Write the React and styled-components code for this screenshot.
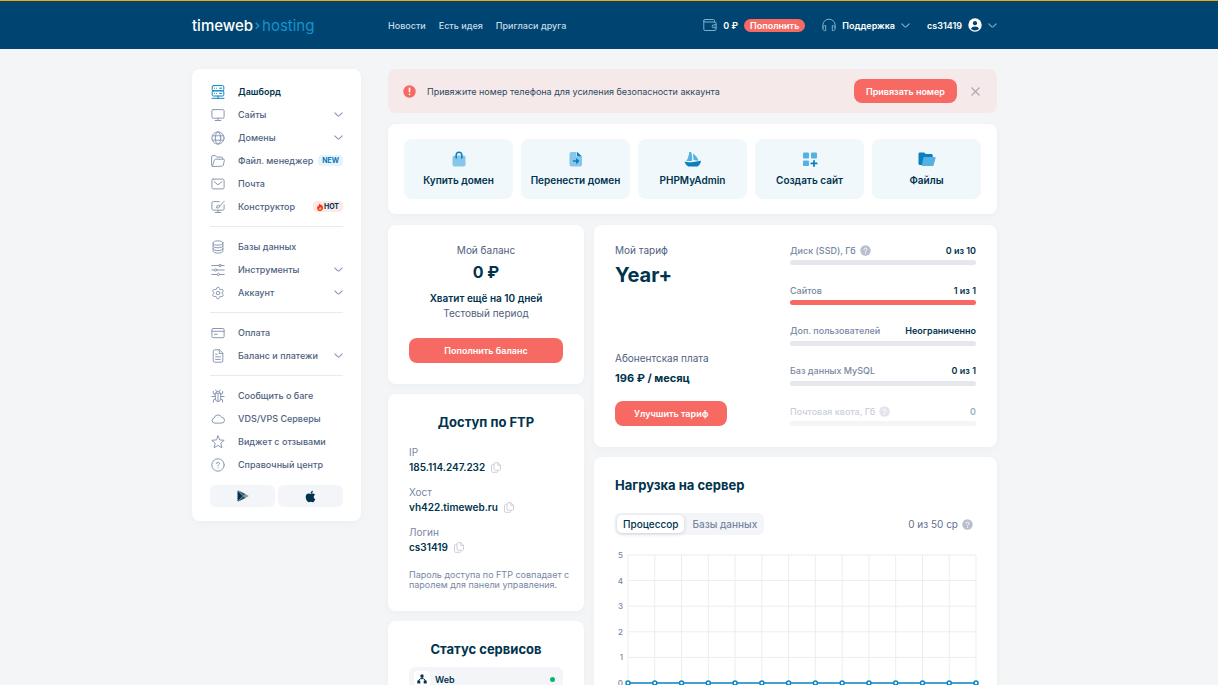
import React, { useState } from 'react'
import styled, { createGlobalStyle, css } from 'styled-components'
import { Settings } from 'lucide-react'
import { FaApple } from 'react-icons/fa'

const GlobalStyle = createGlobalStyle`
  * {
    box-sizing: border-box;
  }

  body {
    margin: 0;
    background: #f3f5f7;
    color: #00334d;
    font-family: 'Inter', 'Noto Sans', sans-serif;
    font-size: 9px;
    line-height: 15px;
    font-weight: 500;
  }

  a {
    color: inherit;
    text-decoration: none;
  }

  button {
    border: 0;
    padding: 0;
    background: none;
    color: inherit;
    font: inherit;
    cursor: pointer;
  }

  h2, p, dl, dd, ul {
    margin: 0;
    padding: 0;
  }

  svg {
    display: block;
    flex: none;
  }
`

/* layout */

const Shell = styled.div`
  padding: 0 29px 0 0;
`

const Container = styled.div`
  max-width: 805px;
  margin: 0 auto;
`

const TopBar = styled.header`
  background: #004571;
  border-top: 1px solid #f5a800;
  color: #fff;
`

const TopInner = styled(Container)`
  display: flex;
  align-items: center;
  height: 48px;
`

const Logo = styled.a`
  display: flex;
  align-items: center;
  gap: 2px;
  width: 196px;
  font-size: 15px;
  font-weight: 500;

  span {
    color: #1294cf;
    font-weight: 400;
  }

  svg {
    color: #1294cf;
  }
`

const TopNav = styled.nav`
  display: flex;
  gap: 13px;
  color: #c5dbe8;
`

const TopActions = styled.div`
  display: flex;
  align-items: center;
  margin-left: auto;
  font-weight: 600;
`

const TopGroup = styled.div`
  display: flex;
  align-items: center;
  gap: 6px;
  margin-left: 17px;

  svg {
    color: #7fb0c8;
  }
`

const Pill = styled.button`
  height: 13px;
  padding: 0 6px;
  border-radius: 7px;
  background: #f66a63;
  line-height: 13px;
`

const Columns = styled(Container)`
  display: grid;
  grid-template-columns: 169px minmax(0, 1fr);
  gap: 27px;
  align-items: start;
  padding: 20px 0;
`

const Card = styled.section`
  background: #fff;
  border-radius: 8px;
  box-shadow: 0 2px 8px rgba(0, 51, 77, 0.03);
  padding: ${(p) => p.$pad || '20px 21px 21px'};
`

const Content = styled.main`
  display: flex;
  flex-direction: column;
  gap: 11px;
`

const Panels = styled.div`
  display: grid;
  grid-template-columns: 196px minmax(0, 1fr);
  gap: 10px;
  align-items: start;
`

const Stack = styled.div`
  display: flex;
  flex-direction: column;
  gap: 10px;
`

/* side menu */

const SideCard = styled(Card).attrs({ as: 'nav', $pad: '11px 18px 14px' })``

const MenuGroup = styled.ul`
  list-style: none;

  & + & {
    margin-top: 8px;
    padding-top: 8px;
    border-top: 1px solid #e8eaef;
  }
`

const MenuLink = styled.a`
  display: flex;
  align-items: center;
  height: 23px;
  padding-left: 1px;
  color: ${(p) => (p.$active ? '#00334d' : '#4f6180')};
  font-weight: ${(p) => (p.$active ? 600 : 500)};

  svg {
    color: ${(p) => (p.$active ? '#0b84c6' : '#8b98b3')};
  }

  > svg:first-child {
    margin-right: 13px;
  }

  > :nth-child(n + 3) {
    margin-left: auto;
  }
`

const Badge = styled.span`
  display: flex;
  align-items: center;
  gap: 1px;
  height: 11px;
  padding: 0 4px;
  border-radius: 4px;
  font-size: 7px;
  line-height: 11px;
  font-weight: 700;
  color: ${(p) => (p.$hot ? '#00334d' : '#0077b8')};
  background: ${(p) => (p.$hot ? '#fde9e8' : '#e6f3fa')};
`

const Stores = styled.div`
  display: grid;
  grid-template-columns: 1fr 1fr;
  gap: 3px;
  margin-top: 9px;
`

const StoreLink = styled.a`
  display: flex;
  align-items: center;
  justify-content: center;
  height: 22px;
  border-radius: 6px;
  background: #f4f5f8;
  color: #00334d;
`

/* alert and shortcuts */

const Alert = styled.div`
  display: flex;
  align-items: center;
  height: 44px;
  padding: 0 16px 0 15px;
  border-radius: 8px;
  background: #f6e9e9;

  p {
    margin: 0 auto 0 11px;
    color: #2c4a62;
    font-weight: 400;
  }
`

const CloseButton = styled.button`
  display: flex;
  margin-left: 13px;
  color: #a9a9b3;
`

const Button = styled.button`
  display: block;
  height: ${(p) => (p.$compact ? '24px' : '25px')};
  width: ${(p) => (p.$wide ? '100%' : 'auto')};
  padding: 0 ${(p) => (p.$compact ? '12px' : '19px')};
  border-radius: 8px;
  background: #f66a63;
  color: #fff;
  font-weight: 600;
`

const Shortcuts = styled(Card).attrs({ $pad: '15px 16px' })`
  display: grid;
  grid-template-columns: repeat(5, 1fr);
  gap: 8px;
`

const Shortcut = styled.a`
  display: flex;
  flex-direction: column;
  align-items: center;
  justify-content: center;
  gap: 6px;
  height: 60px;
  border-radius: 8px;
  background: #f0f8fc;
  font-size: 10px;
  font-weight: 600;
`

/* balance, ftp and status */

const Title = styled.h2`
  font-size: 13px;
  line-height: 16px;
  font-weight: 700;
  text-align: ${(p) => (p.$center ? 'center' : 'left')};
`

const Caption = styled.p`
  font-size: 10px;
  font-weight: ${(p) => (p.$strong ? 600 : 400)};
  color: ${(p) => (p.$strong ? '#00334d' : '#4f6180')};
`

const BalanceCard = styled(Card)`
  text-align: center;
`

const Amount = styled.p`
  margin: 3px 0 8px;
  font-size: 16px;
  line-height: 22px;
  font-weight: 700;
`

const TopUp = styled(Button)`
  margin-top: 17px;
`

const Access = styled.dl`
  display: grid;
  gap: 10px;
  margin: 15px 0;
  font-size: 10px;

  dt {
    color: #7887a3;
    font-weight: 400;
  }

  dd {
    display: flex;
    align-items: center;
    gap: 6px;
    font-weight: 600;
  }

  button {
    color: #c8c9d8;
  }
`

const Note = styled.p`
  margin-right: -12px;
  color: #7887a3;
  line-height: 10px;
  font-weight: 400;
`

const Service = styled.a`
  display: flex;
  align-items: center;
  gap: 5px;
  height: 24px;
  margin-top: 10px;
  padding: 0 8px 0 5px;
  border-radius: 6px;
  background: #f4f5f8;
  font-weight: 600;
`

const ServiceIcon = styled.span`
  display: grid;
  place-items: center;
  width: 16px;
  height: 16px;
  border-radius: 4px;
  background: #fff;
`

const Dot = styled.i`
  width: 5px;
  height: 5px;
  margin-left: auto;
  border-radius: 50%;
  background: #09b66d;
`

/* tariff */

const TariffCard = styled(Card).attrs({ $pad: '18px 21px 21px' })`
  display: grid;
  grid-template-columns: 160px minmax(0, 1fr);
  gap: 15px;
`

const Plan = styled.div`
  display: flex;
  flex-direction: column;
  align-items: flex-start;
`

const PlanName = styled.h2`
  margin: 4px 0 auto;
  font-size: 20px;
  line-height: 26px;
  font-weight: 700;
`

const Price = styled.p`
  margin: 5px 0 15px;
  font-size: 11px;
  font-weight: 700;
`

const Limits = styled.div`
  display: grid;
  align-content: space-between;
  gap: 18px;
  min-height: 183px;
`

const Limit = styled.div`
  opacity: ${(p) => (p.$muted ? 0.4 : 1)};
`

const LimitHead = styled.div`
  display: flex;
  align-items: center;
  gap: 4px;
  height: 14px;
  margin-bottom: 3px;
  color: #7887a3;

  strong {
    margin-left: auto;
    color: #00334d;
    font-weight: 600;
  }
`

const Bar = styled.div`
  height: 5px;
  border-radius: 3px;
  overflow: hidden;
  background: #e6e7ec;

  div {
    height: 100%;
    background: #f66a63;
  }
`

/* server load */

const LoadHead = styled.div`
  display: flex;
  align-items: center;
  justify-content: space-between;
  margin: 20px 0 12px;
`

const Tabs = styled.div`
  display: flex;
  height: 22px;
  padding: 2px;
  border-radius: 6px;
  background: #f4f5f8;
`

const Tab = styled.button`
  padding: 0 6px;
  border-radius: 5px;
  font-size: 10px;
  color: #7887a3;

  & + & {
    padding: 0 5px 0 8px;
  }

  ${(p) =>
    p.$active &&
    css`
      background: #fff;
      color: #00334d;
      box-shadow: 0 1px 4px rgba(0, 40, 80, 0.16);
    `}
`

const Usage = styled.div`
  display: flex;
  align-items: center;
  gap: 4px;
  padding-right: 6px;
  font-size: 10px;
  font-weight: 400;
  color: #5f7090;
`

const ChartSvg = styled.svg`
  width: 100%;
  height: auto;

  text {
    fill: #7887a3;
    font-size: 8px;
    text-anchor: end;
  }
`

/* icons */

const Icon = ({ size = 14, children }) => (
  <svg
    width={size}
    height={size}
    viewBox="0 0 14 14"
    fill="none"
    stroke="currentColor"
    strokeLinecap="round"
    strokeLinejoin="round"
    aria-hidden="true"
  >
    {children}
  </svg>
)

const Chevron = () => (
  <svg
    width="9"
    height="5"
    viewBox="0 0 9 5"
    fill="none"
    stroke="currentColor"
    strokeWidth="1.1"
    strokeLinecap="round"
    strokeLinejoin="round"
    aria-hidden="true"
  >
    <path d="M.8 .8L3.9 3.8Q4.5 4.3 5.1 3.8L8.2 .8" />
  </svg>
)

const Hint = () => (
  <svg width="11" height="11" viewBox="0 0 11 11" aria-hidden="true">
    <circle cx="5.5" cy="5.5" r="5.2" fill="#b9bece" />
    <path d="M4 4.4a1.5 1.4 0 1 1 2.3 1.2c-.6.4-.8.5-.8 1.1" fill="none" stroke="#fff" strokeLinecap="round" />
    <circle cx="5.5" cy="8.2" r=".6" fill="#fff" />
  </svg>
)

const CopyIcon = () => (
  <svg width="10" height="11" viewBox="0 0 10 11" fill="none" stroke="currentColor" strokeWidth=".9" strokeLinejoin="round" aria-hidden="true">
    <path d="M3 1.7a1 1 0 0 1 1-1h3l2.5 2.5v4a1 1 0 0 1-1 1H4a1 1 0 0 1-1-1z" />
    <path d="M6.8.8v2.6h2.6M3 2.7H1.5a1 1 0 0 0-1 1v5.6a1 1 0 0 0 1 1h4.4a1 1 0 0 0 1-1V8.3" />
  </svg>
)

const icons = {
  server: (
    <Icon>
      <rect x="1.2" y=".6" width="11.6" height="5.2" rx="1.2" />
      <rect x="1.2" y="5.8" width="11.6" height="5.2" rx="1.2" />
      <path d="M3.5 3.2h.1M5.6 3.2h.1M8.6 3.2h2M3.5 8.4h.1M5.6 8.4h.1M8.6 8.4h2M7 11v2.2M1 13.3h12" />
    </Icon>
  ),
  monitor: (
    <Icon>
      <rect x=".9" y="1.6" width="12.2" height="8.6" rx="1.3" />
      <path d="M7 10.2v2.2M4.2 12.5h5.6" />
    </Icon>
  ),
  globe: (
    <Icon>
      <circle cx="7" cy="7" r="6.1" />
      <ellipse cx="7" cy="7" rx="2.7" ry="6.1" />
      <path d="M1.5 4.8h11M1.5 9.2h11" />
    </Icon>
  ),
  folder: (
    <Icon>
      <path d="M1.4 12.1C.8 12 .6 11.5.6 11V2.8c0-.7.5-1.2 1.2-1.2h2.6l1.4 1.5h4.7c.7 0 1.2.5 1.2 1.2v.9" />
      <path d="M1.4 12.2l2-6c.2-.6.6-1 1.2-1h7.9c.7 0 1 .5.9 1.1l-1.1 4.8c-.2.7-.6 1.1-1.3 1.1z" />
    </Icon>
  ),
  mail: (
    <Icon>
      <rect x=".9" y="2.1" width="12.2" height="9.8" rx="1.3" />
      <path d="M3 4.6l4 3.2 4-3.2" />
    </Icon>
  ),
  builder: (
    <Icon>
      <path d="M8.2 1.6h-6c-.7 0-1.3.6-1.3 1.3v6c0 .7.6 1.3 1.3 1.3h9.6c.7 0 1.3-.6 1.3-1.3V5M7 10.2v2.2M4.2 12.5h5.6" />
      <path d="M13.2 1.3L8.3 6.4M8.3 5.4a1.3 1.3 0 0 0-2.2.8c-.1.7-.5 1-1.1 1.3 1.4.8 3.5.6 3.9-1.1z" />
    </Icon>
  ),
  database: (
    <Icon>
      <ellipse cx="7" cy="3" rx="4.9" ry="2.1" />
      <path d="M2.1 3v8c0 1.2 2.2 2.1 4.9 2.1s4.9-.9 4.9-2.1V3M2.1 5.8c0 1.1 2.2 2 4.9 2s4.9-.9 4.9-2M2.1 8.6c0 1.1 2.2 2 4.9 2s4.9-.9 4.9-2" />
    </Icon>
  ),
  sliders: (
    <Icon>
      <path d="M.8 2.5h7M10.2 2.5h3M.8 7h2.6M5.8 7h7.4M.8 11.5h5.4M8.6 11.5h4.6" />
      <circle cx="9" cy="2.5" r="1.2" />
      <circle cx="4.6" cy="7" r="1.2" />
      <circle cx="7.4" cy="11.5" r="1.2" />
    </Icon>
  ),
  settings: <Settings size={14} strokeWidth={1.7} aria-hidden="true" />,
  card: (
    <Icon>
      <rect x=".9" y="2.5" width="12.2" height="9.2" rx="1.2" />
      <path d="M1 5.3h12M3.4 8.3h3" />
    </Icon>
  ),
  doc: (
    <Icon>
      <path d="M8.2.8H3.4c-.7 0-1.2.5-1.2 1.2v10c0 .7.5 1.2 1.2 1.2h7.2c.7 0 1.2-.5 1.2-1.2V4.4zM8.2.8v3.6h3.6M4.6 5.2h1.6M4.6 7.8h4.8M4.6 10.4h4.8" />
    </Icon>
  ),
  bug: (
    <Icon>
      <path d="M4.3 4.2h5.4v5.2a2.7 3.2 0 0 1-5.4 0zM4.9 4.2a2.1 2.1 0 0 1 4.2 0M7 4.5v8M5.5 2.2L4.6 1M8.5 2.2l.9-1.2M4.3 7.5H.9M9.7 7.5h3.4M4.3 5.4L2.3 4.6V2.4M9.7 5.4l2-.8V2.4M4.4 10l-2 .8v2.3M9.6 10l2 .8v2.3" />
    </Icon>
  ),
  cloud: (
    <Icon>
      <path d="M3.4 11.1a2.6 2.6 0 0 1-.3-5.1 4 4 0 0 1 7.6-.5 2.8 2.8 0 0 1 0 5.6z" />
    </Icon>
  ),
  star: (
    <Icon>
      <path d="M7 .9l1.7 4 4.5.4-3.4 2.9 1.1 4.6L7 10.4l-3.9 2.4 1.1-4.6L.8 5.3l4.5-.4z" />
    </Icon>
  ),
  help: (
    <Icon>
      <circle cx="7" cy="7" r="6.2" />
      <path d="M5.5 5.6a1.5 1.4 0 1 1 2.2 1.2c-.5.3-.7.6-.7 1.1M7 9.9v.1" />
    </Icon>
  ),
  wallet: (
    <Icon>
      <path d="M11.5 4V2.6c0-.6-.5-1.1-1.1-1.1H2A1.2 1.2 0 0 0 2 4h10c.6 0 1.1.5 1.1 1.1v6.3c0 .6-.5 1.1-1.1 1.1H2c-.7 0-1.2-.5-1.2-1.1V2.7M13.1 6.8h-2.4a1.5 1.5 0 0 0 0 3h2.4M11 8.3h.1" />
    </Icon>
  ),
  headphones: (
    <Icon>
      <path d="M.9 10.2V7a6.1 5.8 0 0 1 12.2 0v3.2" />
      <path d="M.9 9.8c0-1.3 1-2.2 2.8-2.2v5H2.6c-1 0-1.7-.8-1.7-1.8zM13.1 9.8c0-1.3-1-2.2-2.8-2.2v5h1.1c1 0 1.7-.8 1.7-1.8z" />
    </Icon>
  ),
}

const Shape = ({ width = 16, children }) => (
  <svg width={width} height="16" viewBox={`0 0 ${width} 16`} aria-hidden="true">
    {children}
  </svg>
)

const shortcuts = [
  {
    label: 'Купить домен',
    icon: (
      <Shape>
        <rect x="1.5" y="4.5" width="13" height="11" rx="2" fill="#86c6e9" />
        <path d="M5.2 7V4a2.8 2.8 0 0 1 5.6 0v3" fill="none" stroke="#0b7fc0" strokeWidth="1.5" strokeLinecap="round" />
      </Shape>
    ),
  },
  {
    label: 'Перенести домен',
    icon: (
      <Shape>
        <path d="M3.5 1h5v4.8H14v7.7a2 2 0 0 1-2 2H3.5a2 2 0 0 1-2-2V3a2 2 0 0 1 2-2z" fill="#86c6e9" />
        <path d="M9 .8l5 4.8H9.8c-.5 0-.8-.3-.8-.8z" fill="#0b7fc0" />
        <path d="M5 9.3h3V7l3.5 3.1L8 13.2v-2.4H5z" fill="#0b7fc0" />
      </Shape>
    ),
  },
  {
    label: 'PHPMyAdmin',
    icon: (
      <Shape width={18}>
        <path d="M5.2 1h2c1 3.2 1.1 6 .8 9H2.4C4 7.4 4.9 4.500 5.2 1zM9 2.5c2.600 1.700 4.500 4.200 5.600 7.2L9.500 9z" fill="#55b1e0" />
        <path d="M.5 10.6c2 .8 4 .9 7 .6L17 9.8c-.3 2.5-1.3 4.2-3.400 5.7H4.500c-1.700-.6-3.200-2.300-4-4.900z" fill="#0b7fc0" />
      </Shape>
    ),
  },
  {
    label: 'Создать сайт',
    icon: (
      <Shape>
        <rect x="1" y="1.5" width="6" height="6" rx="1" fill="#55b1e0" />
        <rect x="9" y="1.5" width="6" height="6" rx="1" fill="#55b1e0" />
        <rect x="1" y="9.5" width="6" height="5.5" rx="1" fill="#55b1e0" />
        <path d="M12 9.8V15M9.3 12.4h5.4" stroke="#0b7fc0" strokeWidth="1.8" strokeLinecap="round" />
      </Shape>
    ),
  },
  {
    label: 'Файлы',
    icon: (
      <Shape width={18}>
        <path d="M.5 3c0-1 .5-1.5 1.5-1.5h4L7.8 3H13c1 0 1.8.7 1.8 1.7V14H2c-1 0-1.5-.6-1.5-1.5z" fill="#0b7fc0" />
        <path d="M6.6 6h10c.8 0 1.1.5.9 1.2l-1.7 6.5c-.2.9-.7 1.3-1.5 1.3H3.8l1.4-7.8c.1-.8.6-1.2 1.4-1.2z" fill="#55b1e0" />
      </Shape>
    ),
  },
]

const flame = (
  <svg width="6" height="8" viewBox="0 0 6 8" aria-hidden="true">
    <path d="M3 .4c.3 1 .6 1.3 1.2 1.9.2-.3.2-.6.2-.9C5.4 2.4 6 3.7 6 5a2.8 2.8 0 0 1-5.900.2C0 4.3.4 3.6.9 3c.1.4.3.6.5.8C1.4 2.3 2 1.2 3 .4z" fill="#f0301c" />
    <path d="M3.200 3.800c.6.8 1.3 1.3 1.3 2.2a1.5 1.5 0 0 1-2.9 0c0-.5.2-.8.5-1.1l.5.4c0-.6.2-1.1.6-1.5z" fill="#ffb52b" />
  </svg>
)

/* data */

const menu = [
  [
    { label: 'Дашборд', icon: 'server', active: true },
    { label: 'Сайты', icon: 'monitor', nested: true },
    { label: 'Домены', icon: 'globe', nested: true },
    { label: 'Файл. менеджер', icon: 'folder', badge: 'NEW' },
    { label: 'Почта', icon: 'mail' },
    { label: 'Конструктор', icon: 'builder', badge: 'HOT' },
  ],
  [
    { label: 'Базы данных', icon: 'database' },
    { label: 'Инструменты', icon: 'sliders', nested: true },
    { label: 'Аккаунт', icon: 'settings', nested: true },
  ],
  [
    { label: 'Оплата', icon: 'card' },
    { label: 'Баланс и платежи', icon: 'doc', nested: true },
  ],
  [
    { label: 'Сообщить о баге', icon: 'bug' },
    { label: 'VDS/VPS Серверы', icon: 'cloud' },
    { label: 'Виджет с отзывами', icon: 'star' },
    { label: 'Справочный центр', icon: 'help' },
  ],
]

const access = [
  ['IP', '185.114.247.232'],
  ['Хост', 'vh422.timeweb.ru'],
  ['Логин', 'cs31419'],
]

const limits = [
  { label: 'Диск (SSD), Гб', value: '0 из 10', used: 0, hint: true },
  { label: 'Сайтов', value: '1 из 1', used: 100 },
  { label: 'Доп. пользователей', value: 'Неограниченно', used: 0 },
  { label: 'Баз данных MySQL', value: '0 из 1', used: 0 },
  { label: 'Почтовая квота, Гб', value: '0', used: 0, hint: true, muted: true },
]

const load = Array(14).fill(0)

function LoadChart({ points }) {
  const left = 13
  const top = 8
  const stepX = 348 / (points.length - 1)
  const stepY = 25.6
  const x = (i) => left + i * stepX
  const y = (v) => top + (5 - v) * stepY

  return (
    <ChartSvg viewBox="0 0 364 152" role="img" aria-label="Нагрузка на сервер">
      <g stroke="#ebedf1">
        {[0, 1, 2, 3, 4, 5].map((v) => (
          <line key={v} x1={left} x2={x(points.length - 1)} y1={y(v)} y2={y(v)} />
        ))}
        {points.map((_, i) => (
          <line key={i} x1={x(i)} x2={x(i)} y1={y(5)} y2={y(0)} />
        ))}
      </g>
      {[0, 1, 2, 3, 4, 5].map((v) => (
        <text key={v} x="8" y={y(v) + 3}>
          {v}
        </text>
      ))}
      <polyline points={points.map((v, i) => `${x(i)},${y(v)}`).join(' ')} fill="none" stroke="#0b84c6" strokeWidth="1.5" />
      {points.map((v, i) => (
        <circle key={i} cx={x(i)} cy={y(v)} r="2" fill="#fff" stroke="#0b84c6" strokeWidth="1.5" />
      ))}
    </ChartSvg>
  )
}

function Header() {
  return (
    <TopBar>
      <Shell>
        <TopInner>
          <Logo href="#">
            timeweb
            <svg width="5" height="9" viewBox="0 0 5 9" fill="none" stroke="currentColor" strokeWidth="1.5" aria-hidden="true">
              <path d="M.7 1.8l3 3-3 3" />
            </svg>
            <span>hosting</span>
          </Logo>
          <TopNav>
            <a href="#news">Новости</a>
            <a href="#idea">Есть идея</a>
            <a href="#invite">Пригласи друга</a>
          </TopNav>
          <TopActions>
            <TopGroup>
              {icons.wallet}
              <span>0 ₽</span>
              <Pill>Пополнить</Pill>
            </TopGroup>
            <TopGroup>
              {icons.headphones}
              <a href="#support">Поддержка</a>
              <Chevron />
            </TopGroup>
            <TopGroup>
              <a href="#profile">cs31419</a>
              <svg width="14" height="14" viewBox="0 0 14 14" aria-hidden="true">
                <circle cx="7" cy="7" r="6.7" fill="#fff" />
                <circle cx="7" cy="5.2" r="2.1" fill="#004571" />
                <path d="M2.9 10.8a4.3 3.2 0 0 1 8.2 0 5.6 5.6 0 0 1-8.2 0z" fill="#004571" />
              </svg>
              <Chevron />
            </TopGroup>
          </TopActions>
        </TopInner>
      </Shell>
    </TopBar>
  )
}

function SideMenu() {
  return (
    <SideCard>
      {menu.map((group, i) => (
        <MenuGroup key={i}>
          {group.map((item) => (
            <li key={item.label}>
              <MenuLink href="#" $active={item.active}>
                {icons[item.icon]}
                <span>{item.label}</span>
                {item.nested && <Chevron />}
                {item.badge && (
                  <Badge $hot={item.badge === 'HOT'}>
                    {item.badge === 'HOT' && flame}
                    {item.badge}
                  </Badge>
                )}
              </MenuLink>
            </li>
          ))}
        </MenuGroup>
      ))}
      <Stores>
        <StoreLink href="#" aria-label="Google Play">
          <svg width="12" height="12" viewBox="0 0 12 12" aria-hidden="true">
            <path d="M.5.4L6 6 .5 11.6z" fill="#00334d" />
            <path d="M.8.2L8.5 4 6.3 6z" fill="#38586e" />
            <path d="M.8 11.8L8.5 8 6.3 6z" fill="#1f465f" />
            <path d="M8.5 4l3.3 2-3.3 2-2.2-2z" fill="#8799a6" />
          </svg>
        </StoreLink>
        <StoreLink href="#" aria-label="App Store">
          <FaApple size={13} />
        </StoreLink>
      </Stores>
    </SideCard>
  )
}

export default function App() {
  const [alert, setAlert] = useState(true)
  const [tab, setTab] = useState('Процессор')

  return (
    <>
      <GlobalStyle />
      <Header />
      <Shell>
        <Columns>
          <SideMenu />
          <Content>
            {alert && (
              <Alert role="alert">
                <svg width="13" height="13" viewBox="0 0 13 13" aria-hidden="true">
                  <circle cx="6.5" cy="6.5" r="6.2" fill="#f66a63" />
                  <path d="M6.5 3.2v3.6M6.5 9.3v.1" stroke="#fff" strokeWidth="1.6" strokeLinecap="round" />
                </svg>
                <p>Привяжите номер телефона для усиления безопасности аккаунта</p>
                <Button $compact>Привязать номер</Button>
                <CloseButton aria-label="Закрыть" onClick={() => setAlert(false)}>
                  <svg width="11" height="11" viewBox="0 0 11 11" stroke="currentColor" strokeWidth="1.1" aria-hidden="true">
                    <path d="M1.5 1.5l8 8M9.5 1.5l-8 8" />
                  </svg>
                </CloseButton>
              </Alert>
            )}

            <Shortcuts>
              {shortcuts.map((item) => (
                <Shortcut key={item.label} href="#">
                  {item.icon}
                  {item.label}
                </Shortcut>
              ))}
            </Shortcuts>

            <Panels>
              <Stack>
                <BalanceCard $pad="18px 21px 21px">
                  <Caption>Мой баланс</Caption>
                  <Amount>0 ₽</Amount>
                  <Caption $strong>Хватит ещё на 10 дней</Caption>
                  <Caption>Тестовый период</Caption>
                  <TopUp $wide>Пополнить баланс</TopUp>
                </BalanceCard>

                <Card>
                  <Title $center>Доступ по FTP</Title>
                  <Access>
                    {access.map(([name, value]) => (
                      <div key={name}>
                        <dt>{name}</dt>
                        <dd>
                          {value}
                          <button aria-label={`Скопировать ${name}`}>
                            <CopyIcon />
                          </button>
                        </dd>
                      </div>
                    ))}
                  </Access>
                  <Note>Пароль доступа по FTP совпадает с паролем для панели управления.</Note>
                </Card>

                <Card>
                  <Title $center>Статус сервисов</Title>
                  <Service href="#">
                    <ServiceIcon>
                      <svg width="10" height="10" viewBox="0 0 10 10" fill="#00334d" aria-hidden="true">
                        <rect x="3.5" y=".5" width="3" height="3" rx=".6" />
                        <rect x=".3" y="6.5" width="3" height="3" rx=".6" />
                        <rect x="6.7" y="6.5" width="3" height="3" rx=".6" />
                        <path d="M5 3v2M1.8 7V6l1.7-1.3h3L8.2 6v1" fill="none" stroke="#00334d" />
                      </svg>
                    </ServiceIcon>
                    Web
                    <Dot />
                  </Service>
                </Card>
              </Stack>

              <Stack>
                <TariffCard>
                  <Plan>
                    <Caption>Мой тариф</Caption>
                    <PlanName>Year+</PlanName>
                    <Caption>Абонентская плата</Caption>
                    <Price>196 ₽ / месяц</Price>
                    <Button>Улучшить тариф</Button>
                  </Plan>
                  <Limits>
                    {limits.map((item) => (
                      <Limit key={item.label} $muted={item.muted}>
                        <LimitHead>
                          {item.label}
                          {item.hint && <Hint />}
                          <strong>{item.value}</strong>
                        </LimitHead>
                        <Bar role="progressbar" aria-label={item.label} aria-valuenow={item.used}>
                          <div style={{ width: `${item.used}%` }} />
                        </Bar>
                      </Limit>
                    ))}
                  </Limits>
                </TariffCard>

                <Card $pad="20px 18px 21px 21px">
                  <Title>Нагрузка на сервер</Title>
                  <LoadHead>
                    <Tabs role="tablist">
                      {['Процессор', 'Базы данных'].map((name) => (
                        <Tab key={name} role="tab" aria-selected={tab === name} $active={tab === name} onClick={() => setTab(name)}>
                          {name}
                        </Tab>
                      ))}
                    </Tabs>
                    <Usage>
                      0 из 50 cp
                      <Hint />
                    </Usage>
                  </LoadHead>
                  <LoadChart points={load} />
                </Card>
              </Stack>
            </Panels>
          </Content>
        </Columns>
      </Shell>
    </>
  )
}
